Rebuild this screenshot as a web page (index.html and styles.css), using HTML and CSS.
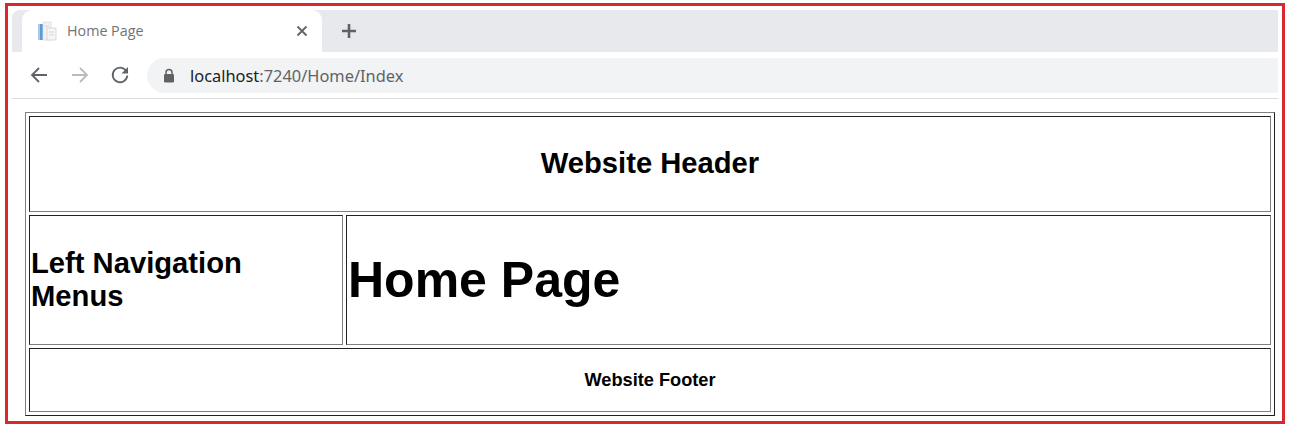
FILE: index.html
```html
<!DOCTYPE html>
<html lang="en">
<head>
    <meta charset="UTF-8">
    <title>Home Page</title>
    <link rel="stylesheet" href="styles.css">
</head>
<body>
    <div class="frame">
        <div class="tab-strip">
            <div class="tab">
                <svg class="favicon" width="20" height="20" viewBox="0 0 20 20">
                    <rect x="1" y="3" width="2" height="16" fill="#a9cbe6"/>
                    <rect x="3" y="3" width="3" height="16" fill="#5b9bd0"/>
                    <rect x="6" y="1" width="8" height="18" fill="#f1f2f4" stroke="#dcdfe2" stroke-width="0.8"/>
                    <rect x="10" y="7" width="9" height="12" fill="#f5f6f7" stroke="#cfd2d6" stroke-width="0.8"/>
                    <path d="M8 5h4M12 11h5M12 14h5" stroke="#d3d6da" stroke-width="1"/>
                </svg>
                <span class="tab-title">Home Page</span>
                <svg class="tab-close" width="12" height="12" viewBox="0 0 12 12">
                    <path d="M1.5 1.5l9 9M10.5 1.5l-9 9" stroke="#5f6368" stroke-width="1.8" fill="none"/>
                </svg>
            </div>
            <svg class="new-tab" width="16" height="16" viewBox="0 0 16 16">
                <path d="M8 1v14M1 8h14" stroke="#5f6368" stroke-width="2.6" fill="none"/>
            </svg>
        </div>
        <div class="toolbar">
            <svg class="nav-icon" width="20" height="20" viewBox="0 0 20 20">
                <path d="M18 10H3M10 3l-7 7 7 7" stroke="#5f6368" stroke-width="1.8" fill="none"/>
            </svg>
            <svg class="nav-icon" width="20" height="20" viewBox="0 0 20 20">
                <path d="M2 10h15M10 3l7 7-7 7" stroke="#b9bbbe" stroke-width="1.8" fill="none"/>
            </svg>
            <svg class="nav-icon" width="20" height="20" viewBox="0 0 20 20">
                <path d="M16.3 6.2A7.3 7.3 0 1 0 17.3 10.5" stroke="#5f6368" stroke-width="1.8" fill="none"/>
                <path d="M18 2v6.5h-6.5z" fill="#5f6368"/>
            </svg>
            <div class="address-bar">
                <svg class="lock" width="12" height="15" viewBox="0 0 12 15">
                    <path d="M3 6V4.5a3 3 0 0 1 6 0V6" stroke="#5f6368" stroke-width="1.5" fill="none"/>
                    <rect x="1" y="6" width="10" height="8.5" rx="1.2" fill="#5f6368"/>
                </svg>
                <span class="url"><span class="url-host">localhost</span>:7240/Home/Index</span>
            </div>
        </div>

        <table class="layout">
            <tr>
                <td colspan="2" class="site-header"><h2>Website Header</h2></td>
            </tr>
            <tr>
                <td class="site-nav"><h2>Left Navigation<br>Menus</h2></td>
                <td class="site-body"><h1>Home Page</h1></td>
            </tr>
            <tr>
                <td colspan="2" class="site-footer"><h3>Website Footer</h3></td>
            </tr>
        </table>
    </div>
</body>
</html>
```

FILE: styles.css
```css
body {
    margin: 0;
    background: #fff;
    font-family: "Liberation Sans", Arial, sans-serif;
    color: #000;
}

.frame {
    width: 1280px;
    height: 421px;
    margin: 3px 0 0 5px;
    padding: 4px 4px 0 4px;
    border: 3px solid #d9272e;
    box-sizing: border-box;
}

.tab-strip {
    display: flex;
    align-items: center;
    height: 42px;
    padding-left: 10px;
    background: #e7e9ec;
    border-top-left-radius: 8px;
}

.tab {
    display: flex;
    align-items: center;
    width: 300px;
    height: 42px;
    padding: 0 14px 0 15px;
    box-sizing: border-box;
    background: #fff;
    border-radius: 10px 10px 0 0;
}

.favicon {
    margin-right: 10px;
}

.tab-title {
    flex: 1;
    margin-top: -2px;
    font-family: "Open Sans", sans-serif;
    font-size: 14.3px;
    color: #6f7276;
}

.new-tab {
    margin-left: 19px;
}

.toolbar {
    display: flex;
    align-items: center;
    height: 47px;
    padding: 0 0 0 17px;
    box-sizing: border-box;
    border-bottom: 1px solid #dadce0;
}

.nav-icon {
    margin-right: 20.5px;
}

.address-bar {
    display: flex;
    align-items: center;
    flex: 1;
    height: 35px;
    margin-left: -3.5px;
    padding-left: 16px;
    background: #f1f3f4;
    border-radius: 18px 0 0 18px;
}

.lock {
    margin-right: 15px;
}

.url {
    font-family: "Noto Sans", sans-serif;
    font-size: 16.4px;
    color: #5f6368;
}

.url-host {
    color: #202124;
}

.layout {
    width: 1250px;
    height: 304px;
    margin: 13px 0 0 13px;
    border: 1px solid;
    border-color: #808080 #222 #222 #808080;
    border-spacing: 3px;
    padding: 0;
}

.layout td {
    padding: 1px;
    border: 1px solid;
    border-color: #222 #808080 #808080 #222;
}

.layout h1,
.layout h2,
.layout h3 {
    margin: 0;
}

.layout h1 {
    font-size: 50px;
}

.layout h2 {
    font-size: 29.2px;
    line-height: 33px;
}

.layout h3 {
    font-size: 18.2px;
}

.site-header {
    height: 92px;
    text-align: center;
}

.site-header h2 {
    padding-bottom: 1px;
}

.site-nav {
    width: 310px;
    height: 126px;
}

.site-footer {
    height: 60px;
    text-align: center;
}
```
